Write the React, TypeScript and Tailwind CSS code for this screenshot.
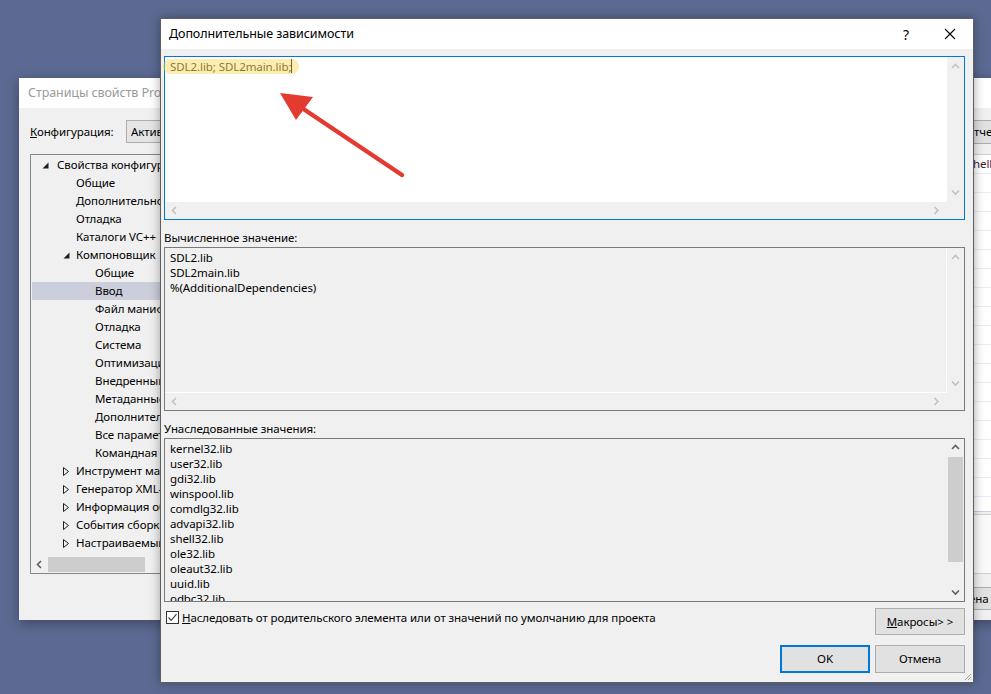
import React from "react";

const tree = [
  { t: "Свойства конфигурации", lvl: 0, exp: true },
  { t: "Общие", lvl: 1 },
  { t: "Дополнительно", lvl: 1 },
  { t: "Отладка", lvl: 1 },
  { t: "Каталоги VC++", lvl: 1 },
  { t: "Компоновщик", lvl: 1, exp: true },
  { t: "Общие", lvl: 2 },
  { t: "Ввод", lvl: 2, sel: true },
  { t: "Файл манифеста", lvl: 2 },
  { t: "Отладка", lvl: 2 },
  { t: "Система", lvl: 2 },
  { t: "Оптимизация", lvl: 2 },
  { t: "Внедренный IDL", lvl: 2 },
  { t: "Метаданные Windows", lvl: 2 },
  { t: "Дополнительно", lvl: 2 },
  { t: "Все параметры", lvl: 2 },
  { t: "Командная строка", lvl: 2 },
  { t: "Инструмент манифеста", lvl: 1, exp: false },
  { t: "Генератор XML-документов", lvl: 1, exp: false },
  { t: "Информация об исходном коде", lvl: 1, exp: false },
  { t: "События сборки", lvl: 1, exp: false },
  { t: "Настраиваемый этап сборки", lvl: 1, exp: false },
];

const inherited = [
  "kernel32.lib",
  "user32.lib",
  "gdi32.lib",
  "winspool.lib",
  "comdlg32.lib",
  "advapi32.lib",
  "shell32.lib",
  "ole32.lib",
  "oleaut32.lib",
  "uuid.lib",
  "odbc32.lib",
  "odbccp32.lib",
];

const padX = ["pl-[25px]", "pl-[44px]", "pl-[63px]"];

type Dir = "up" | "down" | "left" | "right";

function Chev({ dir, color }: { dir: Dir; color: string }) {
  const d: Record<Dir, string> = {
    up: "M1 5 L4.5 1.5 L8 5",
    down: "M1 1.5 L4.5 5 L8 1.5",
    left: "M5 1 L1.5 4.5 L5 8",
    right: "M1.5 1 L5 4.5 L1.5 8",
  };
  const v = dir === "up" || dir === "down";
  return (
    <svg width={v ? 9 : 7} height={v ? 7 : 9} viewBox={v ? "0 0 9 7" : "0 0 7 9"}>
      <path d={d[dir]} fill="none" stroke={color} strokeWidth="1.6" />
    </svg>
  );
}

function Tri({ open }: { open: boolean }) {
  return open ? (
    <svg width="7" height="7" viewBox="0 0 7 7">
      <path d="M6.5 0.5 L6.5 6.5 L0.5 6.5 Z" fill="#1e1e1e" />
    </svg>
  ) : (
    <svg width="6" height="9" viewBox="0 0 6 9">
      <path d="M0.5 0.5 L5.5 4.5 L0.5 8.5 Z" fill="none" stroke="#1e1e1e" strokeWidth="1" />
    </svg>
  );
}

function BackWindow() {
  return (
    <div className="absolute left-[19px] top-[78px] w-[1000px] h-[542px] bg-[#f0f0f0] shadow-[0_3px_12px_rgba(0,0,0,0.35)] flex flex-col">
      <div className="h-[30px] bg-white flex items-center pl-[9px] text-[12.5px] text-[#9a9a9a]">
        Страницы свойств Project1
      </div>
      <div className="flex-1 flex flex-col px-[11px]">
        <div className="flex items-center mt-[12px] h-[23px]">
          <span className="w-[96px] shrink-0">
            <span className="underline">К</span>онфигурация:
          </span>
          <div className="w-[220px] shrink-0 h-[23px] border border-[#adadad] bg-[#e5e5e5] pl-[4px] flex items-center">
            Активная(Debug)
          </div>
          <div className="ml-[584px] shrink-0 w-[160px] h-[24px] border border-[#adadad] bg-[#e1e1e1] flex items-center pl-[9px] whitespace-nowrap">
            Диспетчер конфигураций...
          </div>
        </div>
        <div className="flex mt-[11px] gap-[8px]">
          <div className="w-[300px] shrink-0 h-[420px] border border-[#828790] flex flex-col pt-[1px]">
            <div className="flex-1">
              {tree.map((r, i) => (
                <div
                  key={i}
                  className={`relative h-[18px] flex items-center ml-[1px] ${padX[r.lvl]} ${r.sel ? "bg-[#cccedb]" : ""}`}
                >
                  {r.exp !== undefined && (
                    <span className={`absolute top-[4px] ${r.lvl === 0 ? "left-[10px]" : "left-[31px]"} flex items-center h-[10px]`}>
                      <Tri open={r.exp} />
                    </span>
                  )}
                  <span className="whitespace-nowrap">{r.t}</span>
                </div>
              ))}
            </div>
            <div className="h-[17px] flex items-center">
              <div className="w-[17px] flex justify-center">
                <Chev dir="left" color="#606060" />
              </div>
              <div className="w-[97px] h-[15px] bg-[#cdcdcd]" />
            </div>
          </div>
          <div className="flex-1 h-[420px] flex flex-col">
            <div className="h-[359px] bg-white border border-[#cccedb]">
              {Array.from({ length: 18 }).map((_, i) => (
                <div key={i} className="h-[19px] border-b border-[#ebebf2] flex items-center">
                  <span className="w-[634px] shrink-0" />
                  <span className="text-[#3a1b46] whitespace-nowrap">{i === 0 ? "hello" : ""}</span>
                </div>
              ))}
            </div>
            <div className="mt-[2px] h-[60px] bg-[#fafafa] border border-[#cccedb]" />
          </div>
        </div>
        <div className="flex mt-[13px]">
          <div className="ml-[900px] shrink-0 w-[75px] h-[23px] border border-[#adadad] bg-[#e1e1e1] flex items-center justify-center">
            Отмена
          </div>
        </div>
      </div>
    </div>
  );
}

function Scroll3({ children, active }: { children: React.ReactNode; active: boolean }) {
  return (
    <div className="h-[164px] border border-[#7a7a7a] bg-[#f0f0f0] flex">
      <div className="flex-1 overflow-hidden pl-[5px] pt-[2px] leading-[15px]">{children}</div>
      <div className="w-[17px] flex flex-col items-center">
        <div className="h-[17px] flex items-center">
          <Chev dir="up" color="#606060" />
        </div>
        <div className="w-[15px] h-[105px] bg-[#cdcdcd] mt-[1px]" />
        <div className="flex-1" />
        <div className="h-[17px] flex items-center">
          <Chev dir="down" color={active ? "#606060" : "#c2c2c2"} />
        </div>
      </div>
    </div>
  );
}

function Dialog() {
  return (
    <div className="absolute left-[160px] top-[18px] w-[814px] h-[665px] border border-[#5e5e5e] bg-[#f0f0f0] shadow-[0_0_10px_rgba(0,0,0,0.35)] flex flex-col">
      <div className="h-[30px] bg-white flex items-center pl-[8px] text-[12.5px] text-black">
        <span>Дополнительные зависимости</span>
        <span className="ml-auto mr-[35px] text-[14px]">?</span>
        <svg width="12" height="12" viewBox="0 0 12 12" className="mr-[17px]">
          <path d="M1 1 L11 11 M11 1 L1 11" stroke="#000" strokeWidth="1.1" />
        </svg>
      </div>
      <div className="flex-1 flex flex-col pl-[3px] pr-[8px]">
        {/* edit box */}
        <div className="mt-[7px] h-[164px] border border-[#0078d7] bg-white flex flex-col">
          <div className="flex-1 flex">
            <div className="flex-1 pl-[5px] pt-[2px] leading-[15px] flex">
              <span className="text-[#2a2a2a]">SDL2.lib; SDL2main.lib;</span>
              <span className="inline-block w-[1px] h-[14px] bg-black" />
            </div>
            <div className="w-[17px] bg-[#f0f0f0] flex flex-col items-center justify-between py-[6px]">
              <Chev dir="up" color="#c2c2c2" />
              <Chev dir="down" color="#c2c2c2" />
            </div>
          </div>
          <div className="h-[17px] bg-[#f0f0f0] flex items-center justify-between pl-[6px] pr-[24px]">
            <Chev dir="left" color="#c2c2c2" />
            <Chev dir="right" color="#c2c2c2" />
          </div>
        </div>

        <div className="pt-[10px] pb-[2px] leading-[15px]">Вычисленное значение:</div>
        <div className="h-[164px] border border-[#7a7a7a] bg-[#f0f0f0] flex flex-col">
          <div className="flex-1 flex">
            <div className="flex-1 pl-[5px] pt-[2px] leading-[15px] border-r border-b border-white">
              <div>SDL2.lib</div>
              <div>SDL2main.lib</div>
              <div>%(AdditionalDependencies)</div>
            </div>
            <div className="w-[17px] flex flex-col items-center justify-between py-[6px]">
              <Chev dir="up" color="#c2c2c2" />
              <Chev dir="down" color="#c2c2c2" />
            </div>
          </div>
          <div className="h-[17px] flex items-center justify-between pl-[6px] pr-[24px]">
            <Chev dir="left" color="#c2c2c2" />
            <Chev dir="right" color="#c2c2c2" />
          </div>
        </div>

        <div className="pt-[10px] pb-[2px] leading-[15px]">Унаследованные значения:</div>
        <Scroll3 active>
          {inherited.map((l) => (
            <div key={l}>{l}</div>
          ))}
        </Scroll3>

        <div className="flex mt-[6px]">
          <div className="flex items-center h-[13px] mt-[3px] ml-[2px]">
            <div className="w-[13px] h-[13px] shrink-0 border border-[#333] bg-white flex items-center justify-center">
              <svg width="11" height="11" viewBox="0 0 11 11">
                <path d="M1.5 5.5 L4.2 8.3 L9.5 2.2" fill="none" stroke="#444" strokeWidth="1.2" />
              </svg>
            </div>
            <span className="ml-[3px] whitespace-nowrap">
              <span className="underline">Н</span>аследовать от родительского элемента или от значений по умолчанию для проекта
            </span>
          </div>
          <div className="ml-auto w-[90px] h-[27px] border border-[#adadad] bg-[#e1e1e1] flex items-center justify-center">
            <span>
              <span className="underline">М</span>акросы&gt; &gt;
            </span>
          </div>
        </div>

        <div className="flex justify-end gap-[5px] mt-[10px]">
          <div className="w-[90px] h-[28px] border-2 border-[#0078d7] bg-[#e1e1e1] flex items-center justify-center">OK</div>
          <div className="w-[90px] h-[28px] border border-[#adadad] bg-[#e1e1e1] flex items-center justify-center">Отмена</div>
        </div>
      </div>
      <svg width="8" height="8" viewBox="0 0 8 8" className="absolute right-[1px] bottom-[1px]">
        <path d="M7 1 L1 7 M7 4 L4 7 M7 6.5 L6.5 7" stroke="#a0a0a0" strokeWidth="1" />
      </svg>
    </div>
  );
}

export default function App() {
  return (
    <div className="relative w-[991px] h-[694px] overflow-hidden bg-[#5c6a93] text-[11.5px] tracking-[-0.08px] text-black font-['Segoe_UI','Noto_Sans',sans-serif]">
      <BackWindow />
      <Dialog />
      <svg className="absolute left-0 top-0 pointer-events-none" width="991" height="694" viewBox="0 0 991 694">
        <rect x="163" y="59" width="136" height="15" rx="7.5" fill="rgba(253,214,80,0.45)" />
        <line x1="402" y1="175" x2="296" y2="104" stroke="#e33b30" strokeWidth="4.5" strokeLinecap="round" />
        <path d="M280 93 L313 97 L296 120 Z" fill="#e33b30" />
      </svg>
    </div>
  );
}
